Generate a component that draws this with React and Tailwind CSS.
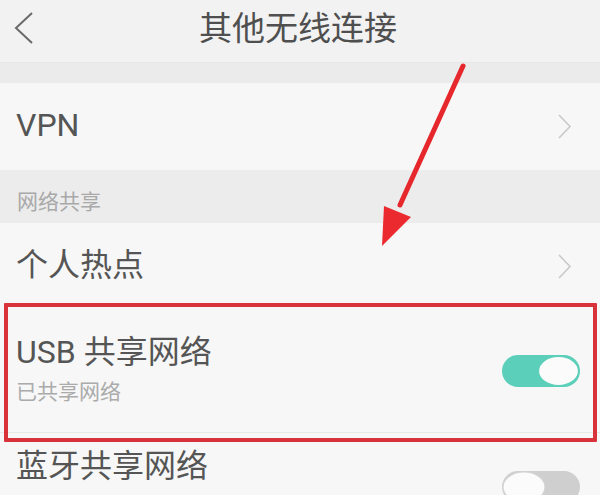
import React from "react";

const font = { fontFamily: "Roboto, 'Noto Sans CJK SC', sans-serif" };

function ChevronRight() {
  return (
    <svg width="16" height="26" viewBox="0 0 16 26" className="shrink-0">
      <polyline points="2,1 13,12.5 2,24" fill="none" stroke="#c9c9c9" strokeWidth="1.6" />
    </svg>
  );
}

function Toggle({ on }) {
  return on ? (
    <svg width="80" height="34" viewBox="0 0 80 34" className="shrink-0">
      <rect x="1" y="1" width="78" height="32" rx="16" fill="#5ccfba" />
      <ellipse cx="57.5" cy="17" rx="20" ry="14.6" fill="#fbfbfb" stroke="#5ccfba" strokeWidth="1.2" />
    </svg>
  ) : (
    <svg width="80" height="34" viewBox="0 0 80 34" className="shrink-0">
      <rect x="1" y="1" width="78" height="32" rx="16" fill="#cfcfcf" />
      <ellipse cx="23" cy="17" rx="21" ry="15" fill="#fbfbfb" stroke="#d4d4d4" strokeWidth="1.2" />
    </svg>
  );
}

export default function App() {
  return (
    <div className="relative w-[600px] h-[495px] overflow-hidden bg-[#f7f7f7]" style={font}>
      {/* header */}
      <div className="relative h-[62px] bg-[#f2f2f2] flex items-center justify-center">
        <svg width="22" height="34" viewBox="0 0 22 34" className="absolute left-[13px] top-[11px]">
          <polyline points="19,2 3,17 19,32" fill="none" stroke="#6a6a6a" strokeWidth="2" />
        </svg>
        <span className="text-[33px] leading-none text-[#4f4f4f] ml-[-4px] mt-[-6px]">其他无线连接</span>
      </div>
      <div className="h-[21px] bg-[#ebebeb] border-t border-[#e6e6e6]" />

      {/* VPN */}
      <div className="h-[87px] bg-[#f7f7f7] flex items-center justify-between pl-[16px] pr-[27px]">
        <span className="text-[32px] leading-none text-[#555] mt-[-4px]">VPN</span>
        <ChevronRight />
      </div>

      {/* section */}
      <div className="h-[53px] bg-[#ececec] flex items-center pl-[17px]">
        <span className="text-[21px] leading-none text-[#a9a9a9] mt-[12px]">网络共享</span>
      </div>

      {/* hotspot */}
      <div className="h-[87px] bg-[#f7f7f7] flex items-center justify-between pl-[16px] pr-[27px]">
        <span className="text-[32px] leading-none text-[#555] mt-[-4px]">个人热点</span>
        <ChevronRight />
      </div>

      {/* USB */}
      <div className="h-[123px] bg-[#f7f7f7] flex items-center justify-between pl-[16px] pr-[19px] border-b border-[#e8e8e8] ml-[0px]">
        <div className="flex flex-col gap-[9px] mt-[-4px]">
          <span className="text-[32px] leading-[36px] text-[#555]">USB 共享网络</span>
          <span className="text-[21px] leading-[26px] text-[#ababab]">已共享网络</span>
        </div>
        <Toggle on />
      </div>

      {/* Bluetooth */}
      <div className="h-[120px] bg-[#f7f7f7] flex items-start justify-between pl-[16px] pr-[19px]">
        <span className="text-[32px] leading-[36px] text-[#555] mt-[15px]">蓝牙共享网络</span>
        <div className="mt-[37px]">
          <Toggle on={false} />
        </div>
      </div>

      {/* red highlight box */}
      <div className="absolute left-[4px] top-[303px] w-[593px] h-[139px] border-[4px] border-[#d8323a] rounded-[1px] pointer-events-none" />

      {/* red arrow */}
      <svg className="absolute left-0 top-0 pointer-events-none" width="600" height="495" viewBox="0 0 600 495">
        <line x1="463" y1="66" x2="400" y2="205" stroke="#e6272c" strokeWidth="5" strokeLinecap="round" />
        <polygon points="382,246 384,206 411,217" fill="#ea2a2e" />
      </svg>
    </div>
  );
}
